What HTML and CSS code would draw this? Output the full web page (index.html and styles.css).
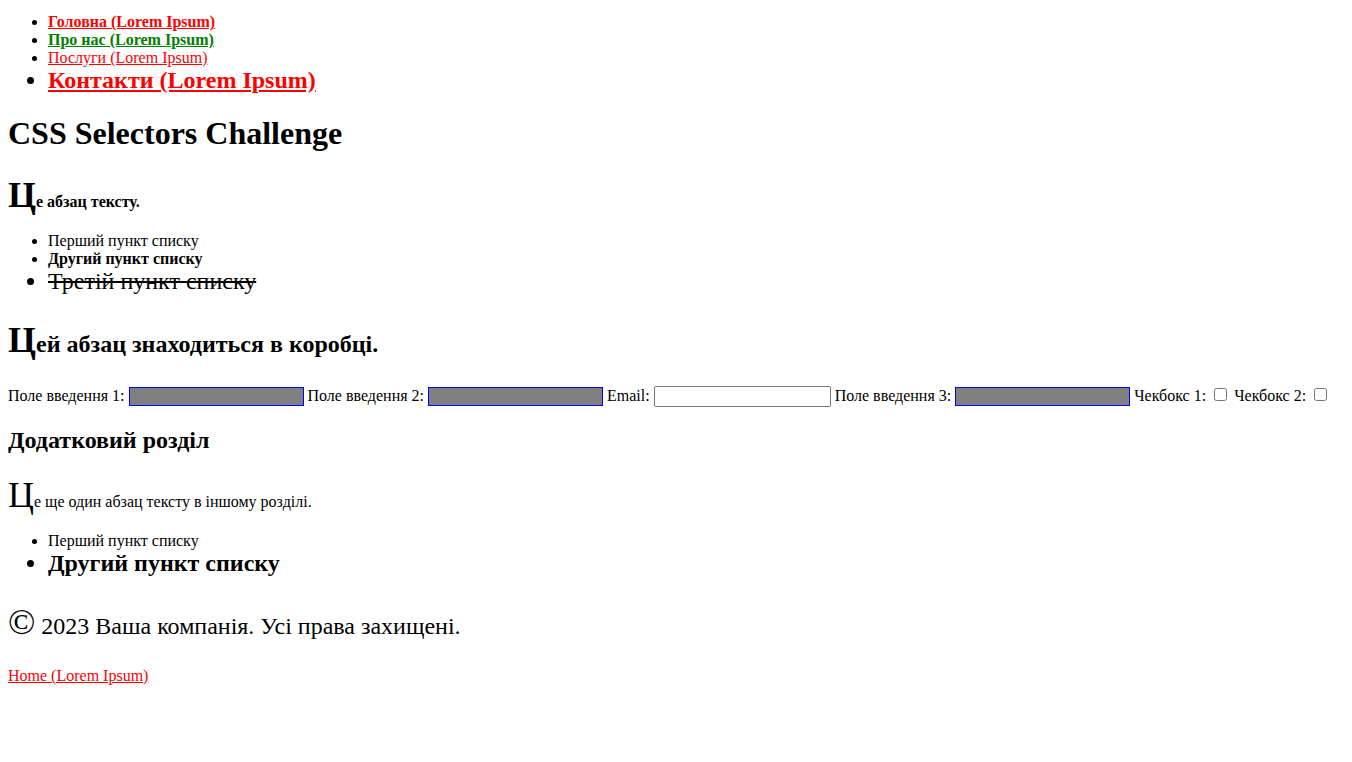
FILE: index.html
```html
<!DOCTYPE html>
<html lang="uk">
<head>
<meta charset="utf-8">
<title>CSS Selectors Challenge</title>
<link rel="stylesheet" href="styles.css">
</head>
<body>
<nav>
  <ul class="nav-list">
    <li class="nav-item nav-first"><a href="#">Головна (Lorem Ipsum)</a></li>
    <li class="nav-item nav-second"><a href="#">Про нас (Lorem Ipsum)</a></li>
    <li class="nav-item nav-third"><a href="#">Послуги (Lorem Ipsum)</a></li>
    <li class="nav-item nav-last"><a href="#">Контакти (Lorem Ipsum)</a></li>
  </ul>
</nav>
<h1 class="title">CSS Selectors Challenge</h1>
<p class="text intro">Це абзац тексту.</p>
<ul class="list">
  <li>Перший пункт списку</li>
  <li class="strong">Другий пункт списку</li>
  <li class="done">Третій пункт списку</li>
</ul>
<div class="box">
  <p class="text box-text">Цей абзац знаходиться в коробці.</p>
</div>
<form class="form">
  <label>Поле введення 1:</label> <input class="field" type="text">
  <label>Поле введення 2:</label> <input class="field" type="text">
  <label>Email:</label> <input class="email" type="email">
  <label>Поле введення 3:</label> <input class="field" type="text">
  <label>Чекбокс 1:</label> <input type="checkbox">
  <label>Чекбокс 2:</label> <input type="checkbox">
</form>
<section class="extra">
  <h2 class="extra-title">Додатковий розділ</h2>
  <p class="text extra-text">Це ще один абзац тексту в іншому розділі.</p>
  <ul class="list">
    <li>Перший пункт списку</li>
    <li class="big">Другий пункт списку</li>
  </ul>
</section>
<footer class="footer">
  <p class="text copy">© 2023 Ваша компанія. Усі права захищені.</p>
  <a class="home" href="#">Home (Lorem Ipsum)</a>
</footer>
</body>
</html>
```
FILE: styles.css
```css
body {
  font-family: "Liberation Serif", "Times New Roman", serif;
  font-size: 16px;
}
.nav-list { margin-top: 5px; }
.nav-item a { color: red; }
.nav-first a { font-weight: bold; }
.nav-second a { font-weight: bold; color: green; }
.nav-third a { font-weight: normal; }
.nav-last { font-size: 24px; }
.nav-last a { font-weight: bold; }
.text::first-letter { font-size: 36px; }
.intro { font-weight: bold; }
.list .strong { font-weight: bold; }
.list .done { font-size: 24px; text-decoration: line-through; }
.list .big { font-size: 24px; font-weight: bold; }
.box-text { font-weight: bold; font-size: 24px; }
.form input[type="text"],
.form input[type="email"] {
  font-family: "Liberation Sans", Arial, sans-serif;
  font-size: 13.333px;
  width: 169px;
}
.field { background: gray; border: 1px solid blue; }
.extra-title { font-size: 24px; }
.copy { font-size: 24px; }
.home { color: red; }
```
